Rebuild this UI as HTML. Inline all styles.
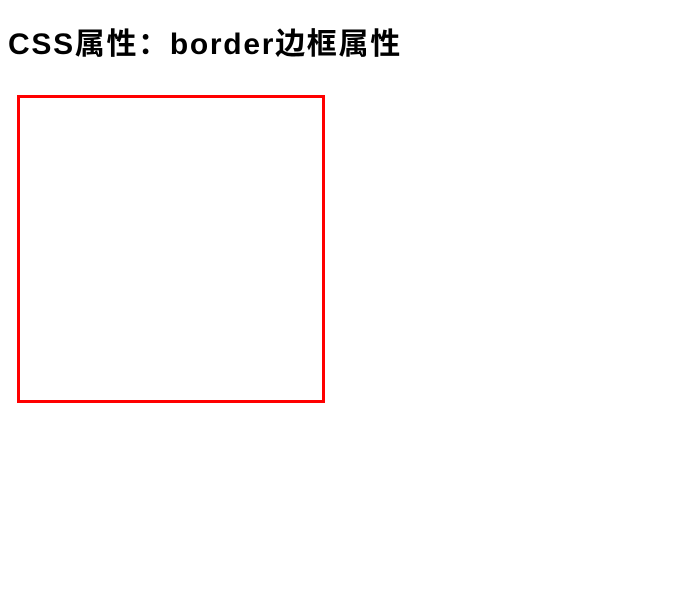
<!DOCTYPE html>
<html><head><meta charset="utf-8"><style>
body{margin:0;background:#fff;}
h1{position:absolute;left:8px;top:25px;margin:0;font:bold 30px/40px "Liberation Sans","Noto Sans CJK SC",sans-serif;color:#000;letter-spacing:1.7px;white-space:nowrap;}
.box{position:absolute;left:17px;top:95px;width:302px;height:302px;border:3px solid #f00;}
</style></head><body>
<h1>CSS属性：border边框属性</h1>
<div class="box"></div>
</body></html>
